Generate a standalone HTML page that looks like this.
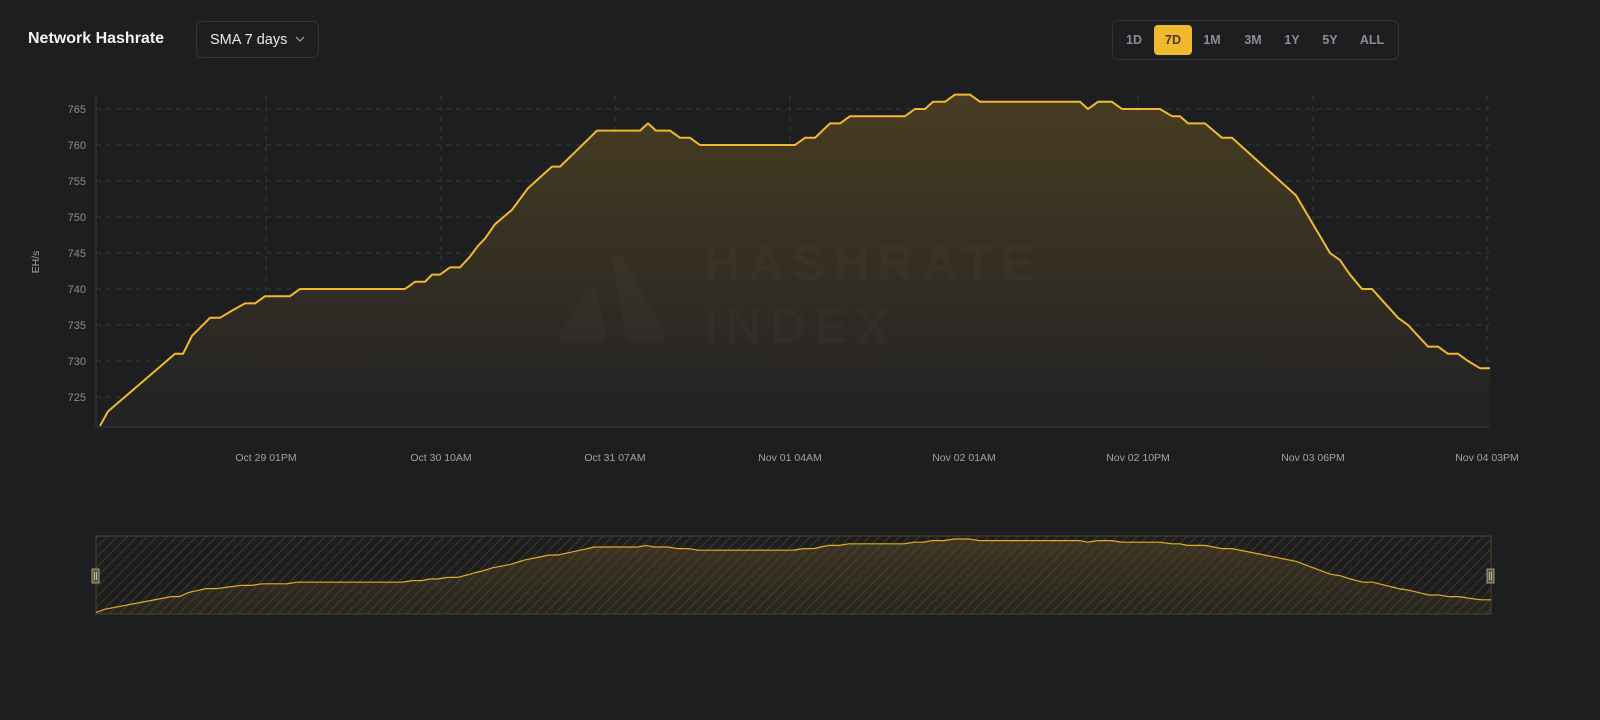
<!DOCTYPE html>
<html><head><meta charset="utf-8"><style>
body{margin:0;width:1600px;height:720px;background:#1d1e20;font-family:"Liberation Sans",sans-serif;overflow:hidden;position:relative}
.t{position:absolute;left:28px;top:30px;color:#f2f2f2;font-weight:bold;font-size:16px}
.sel{position:absolute;left:196px;top:21px;width:123px;height:37px;border:1px solid #333538;border-radius:6px;box-sizing:border-box;color:#e8e8e8;font-size:14.5px;line-height:37px;padding-left:13px}
.sel svg{position:absolute;right:13px;top:14px}
.grp{position:absolute;left:1112px;top:20px;width:287px;height:40px;border:1px solid #333538;border-radius:6px;box-sizing:border-box}
.b{position:absolute;top:25px;height:30px;line-height:30px;font-size:12.5px;font-weight:bold;color:#8a8d93;text-align:center}
.b.a{background:#f0b92f;color:#4a3a10;border-radius:4px}
</style></head><body>
<div class="t">Network Hashrate</div>
<div class="sel">SMA 7 days<svg width="10" height="7" viewBox="0 0 10 7"><path d="M1 1L5 5L9 1" stroke="#999" stroke-width="1.3" fill="none"/></svg></div>
<div class="grp"></div>
<div class="b" style="left:1120px;width:28px">1D</div>
<div class="b a" style="left:1154px;width:38px">7D</div>
<div class="b" style="left:1197px;width:30px">1M</div>
<div class="b" style="left:1237px;width:32px">3M</div>
<div class="b" style="left:1278px;width:28px">1Y</div>
<div class="b" style="left:1315px;width:30px">5Y</div>
<div class="b" style="left:1354px;width:36px">ALL</div>
<svg id="c" width="1600" height="720" style="position:absolute;left:0;top:0" xmlns="http://www.w3.org/2000/svg">
<defs>
<linearGradient id="g" x1="0" y1="0" x2="0" y2="1"><stop offset="0" stop-color="#483c22"/><stop offset="1" stop-color="#222224"/></linearGradient>
<linearGradient id="g2" x1="0" y1="0" x2="0" y2="1"><stop offset="0" stop-color="#3e3522"/><stop offset="1" stop-color="#262522"/></linearGradient>
<pattern id="h" width="7" height="7" patternUnits="userSpaceOnUse" patternTransform="rotate(45)"><line x1="0" y1="0" x2="0" y2="7" stroke="#5a4c2a" stroke-width="1.5"/></pattern>
</defs>
<g id="grid" stroke="#38393c" stroke-dasharray="5,5" stroke-width="1"></g>
<path id="area" fill="url(#g)"/>
<g fill="#ffffff" fill-opacity="0.025">
<path d="M586 290 Q590 282 596 290 L606 335 Q607 341 600 341 L566 341 Q556 341 561 332 Z"/>
<path d="M612 258 Q615 250 622 256 L665 332 Q668 341 658 341 L632 341 Q626 341 625 334 Z"/>
<text x="704" y="280" font-size="50" font-weight="bold" letter-spacing="8" font-family="Liberation Sans,sans-serif">HASHRATE</text>
<text x="704" y="343" font-size="50" font-weight="bold" letter-spacing="8" font-family="Liberation Sans,sans-serif">INDEX</text>
</g>
<path id="line" fill="none" stroke="#f0b92f" stroke-width="2" stroke-linejoin="round"/>
<line x1="96" y1="427" x2="1490" y2="427" stroke="#3a3b3e"/>
<line x1="96" y1="96" x2="96" y2="427" stroke="#3a3b3e"/>
<g id="yl" font-size="11" fill="#8a8c90" text-anchor="end"></g>
<g id="xl" font-size="10.5" fill="#a0a2a6" text-anchor="middle"></g>
<text x="39" y="262" font-size="10.5" fill="#a0a2a6" text-anchor="middle" transform="rotate(-90 39 262)">EH/s</text>
<path id="narea" fill="url(#g2)"/>
<rect x="96" y="536" width="1395" height="78" fill="url(#h)" opacity="0.8"/>
<rect x="96" y="536" width="1395" height="78" fill="none" stroke="#4f4426"/>
<path id="nline" fill="none" stroke="#e0aa2a" stroke-width="1.2"/>
<rect x="92" y="569" width="7" height="14" fill="#6a5a34" stroke="#999" stroke-width="1"/>
<rect x="1487" y="569" width="7" height="14" fill="#6a5a34" stroke="#999" stroke-width="1"/>
<path d="M94.5 572v8M96.5 572v8M1489.5 572v8M1491.5 572v8" stroke="#ccc" stroke-width="0.8"/>
</svg>
<script>
var d=[[100,721],[108,723],[175,731],[183,731],[192,733.5],[210,736],[220,736],[232,737],[245,738],[255,738],[265,739],[290,739],[300,740],[405,740],[415,741],[425,741],[432,742],[440,742],[450,743],[460,743],[470,744.5],[478,746],[485,747],[495,749],[512,751],[520,752.5],[528,754],[540,755.5],[552,757],[560,757],[575,759],[597,762],[640,762],[648,763],[656,762],[670,762],[680,761],[690,761],[700,760],[795,760],[805,761],[815,761],[830,763],[840,763],[850,764],[905,764],[915,765],[925,765],[933,766],[945,766],[955,767],[970,767],[980,766],[1080,766],[1088,765],[1098,766],[1112,766],[1122,765],[1160,765],[1172,764],[1180,764],[1188,763],[1205,763],[1222,761],[1232,761],[1296,753],[1330,745],[1340,744],[1350,742],[1362,740],[1372,740],[1385,738],[1398,736],[1408,735],[1428,732],[1438,732],[1448,731],[1458,731],[1468,730],[1480,729],[1490,729]];
function Y(v){return 109+(765-v)*7.2}
function NX(x){return 96+(x-100)*1395/1390}
function NY(v){return 539+(767-v)*1.6}
function smooth(pts,hmax){var s="M"+pts[0][0]+" "+pts[0][1];for(var i=1;i<pts.length;i++){var a=pts[i-1],b=pts[i],dx=b[0]-a[0],h=Math.min(dx*0.35,hmax),dy=b[1]-a[1];
var ax=a[0]+h,ay=a[1]+dy*h/dx,bx=b[0]-h,by=b[1]-dy*h/dx;
s+="C"+ax.toFixed(1)+" "+ay.toFixed(1)+" "+bx.toFixed(1)+" "+by.toFixed(1)+" "+b[0].toFixed(1)+" "+b[1].toFixed(1);}return s}
var P=d.map(function(q){return[q[0],Y(q[1])]}),N=d.map(function(q){return[NX(q[0]),NY(q[1])]});
var p=smooth(P,4),np=smooth(N,4);
document.getElementById("line").setAttribute("d",p);
document.getElementById("area").setAttribute("d",p+"L1490 427L100 427Z");
document.getElementById("nline").setAttribute("d",np);
document.getElementById("narea").setAttribute("d",np+"L1491 614L96 614Z");
var g=document.getElementById("grid"),s="",yl="",xl="";
for(var v=725;v<=765;v+=5){var y=Y(v);s+='<line x1="96" y1="'+y+'" x2="1490" y2="'+y+'"/>';yl+='<text x="86" y="'+(y+4)+'">'+v+'</text>';}
var xs=[266,441,615,790,964,1138,1313,1487],lb=["Oct 29 01PM","Oct 30 10AM","Oct 31 07AM","Nov 01 04AM","Nov 02 01AM","Nov 02 10PM","Nov 03 06PM","Nov 04 03PM"];
xs.forEach(function(x,i){s+='<line x1="'+x+'" y1="96" x2="'+x+'" y2="427"/>';xl+='<text x="'+x+'" y="461">'+lb[i]+'</text>';});
g.innerHTML=s;document.getElementById("yl").innerHTML=yl;document.getElementById("xl").innerHTML=xl;
</script>
</body></html>
